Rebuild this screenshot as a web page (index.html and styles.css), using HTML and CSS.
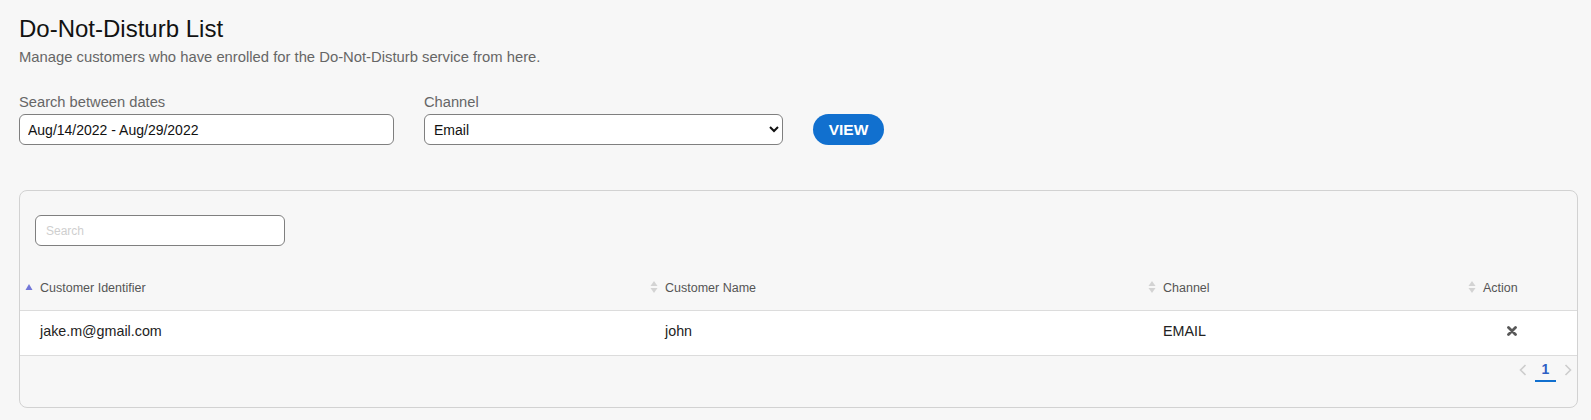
FILE: index.html
```html
<!DOCTYPE html>
<html lang="en">
<head>
    <meta charset="UTF-8">
    <meta name="viewport" content="width=device-width, initial-scale=1.0">
    <title>Do-Not-Disturb List</title>
    <link rel="stylesheet" href="styles.css">
</head>
<body>

    <h1>Do-Not-Disturb List</h1>
    <p class="subtitle">Manage customers who have enrolled for the Do-Not-Disturb service from here.</p>

    <div class="filters">
        <div class="field date-field">
            <label for="dates">Search between dates</label>
            <input id="dates" class="text-input" type="text" value="Aug/14/2022 - Aug/29/2022">
        </div>
        <div class="field channel-field">
            <label for="channel">Channel</label>
            <select id="channel" class="select-input">
                <option>Email</option>
                <option>SMS</option>
                <option>Voice</option>
            </select>
        </div>
        <button class="view-btn">VIEW</button>
    </div>

    <div class="card">
        <div class="card-search">
            <input class="search-input" type="text" placeholder="Search">
        </div>

        <table class="dnd-table">
            <colgroup>
                <col class="col-id">
                <col class="col-name">
                <col class="col-channel">
                <col class="col-action">
            </colgroup>
            <thead>
                <tr>
                    <th>
                        <span class="sort sort-asc">
                            <svg width="8" height="14" viewBox="0 0 8 14"><path d="M0.5 10 L4 4 L7.5 10 Z"/></svg>
                        </span>Customer Identifier
                    </th>
                    <th>
                        <span class="sort">
                            <svg width="8" height="14" viewBox="0 0 8 14"><path d="M0.5 6 L4 1 L7.5 6 Z"/><path d="M0.5 8 L4 13 L7.5 8 Z"/></svg>
                        </span>Customer Name
                    </th>
                    <th>
                        <span class="sort">
                            <svg width="8" height="14" viewBox="0 0 8 14"><path d="M0.5 6 L4 1 L7.5 6 Z"/><path d="M0.5 8 L4 13 L7.5 8 Z"/></svg>
                        </span>Channel
                    </th>
                    <th>
                        <span class="sort">
                            <svg width="8" height="14" viewBox="0 0 8 14"><path d="M0.5 6 L4 1 L7.5 6 Z"/><path d="M0.5 8 L4 13 L7.5 8 Z"/></svg>
                        </span>Action
                    </th>
                </tr>
            </thead>
            <tbody>
                <tr>
                    <td>jake.m@gmail.com</td>
                    <td>john</td>
                    <td>EMAIL</td>
                    <td class="action-cell">
                        <button class="remove-btn" title="Remove">
                            <svg width="10" height="10" viewBox="0 0 10 10"><path d="M1.5 1.5 L8.5 8.5 M8.5 1.5 L1.5 8.5"/></svg>
                        </button>
                    </td>
                </tr>
            </tbody>
        </table>

        <div class="pager">
            <span class="pager-arrow">
                <svg width="8" height="12" viewBox="0 0 8 12"><path d="M6.5 1 L1.5 6 L6.5 11"/></svg>
            </span>
            <span class="pager-page">1</span>
            <span class="pager-arrow">
                <svg width="8" height="12" viewBox="0 0 8 12"><path d="M1.5 1 L6.5 6 L1.5 11"/></svg>
            </span>
        </div>
    </div>

</body>
</html>
```

FILE: styles.css
```css
      body {
          background-color: #f7f7f7;
          color: #121212;
          font-family: 'Liberation Sans', Arial, sans-serif;
          margin: 0;
          padding: 0 13px 0 19px;
      }
      h1 {
          font-size: 24px;
          font-weight: normal;
          line-height: 28px;
          margin: 15px 0 0 0;
      }
      .subtitle {
          font-size: 14.8px;
          line-height: 18px;
          color: #666;
          margin: 5px 0 0 0;
      }
      .filters {
          display: flex;
          align-items: flex-end;
          gap: 30px;
          margin-top: 27px;
      }
      .field {
          display: flex;
          flex-direction: column;
          gap: 3px;
      }
      .field label {
          font-size: 14.7px;
          line-height: 18px;
          color: #666;
      }
      .date-field {
          width: 375px;
      }
      .channel-field {
          width: 359px;
      }
      .text-input, .select-input {
          box-sizing: border-box;
          height: 31px;
          border: 1px solid #7f7f7f;
          border-radius: 6px;
          background-color: #fff;
          font-family: 'Liberation Sans', Arial, sans-serif;
          font-size: 14px;
          color: #111;
          padding: 0 8px;
          width: 100%;
      }
      .select-input {
          padding: 0 5px;
      }
      .view-btn {
          height: 31px;
          width: 71px;
          border: none;
          border-radius: 16px;
          background-color: #1170cf;
          color: #fff;
          font-family: 'Liberation Sans', Arial, sans-serif;
          font-size: 15.5px;
          font-weight: bold;
          cursor: pointer;
      }
      .card {
          margin-top: 45px;
          border: 1px solid #d2d2d2;
          border-radius: 8px;
          padding-bottom: 25px;
      }
      .card-search {
          padding: 24px 15px 0 15px;
      }
      .search-input {
          box-sizing: border-box;
          width: 250px;
          height: 31px;
          border: 1px solid #7f7f7f;
          border-radius: 6px;
          background-color: #fff;
          font-family: 'Liberation Sans', Arial, sans-serif;
          font-size: 12px;
          padding: 0 10px;
      }
      .search-input::placeholder {
          color: #cfcfcf;
      }
      .dnd-table {
          width: 100%;
          border-collapse: collapse;
          table-layout: fixed;
          margin-top: 24px;
      }
      .col-id {
          width: 625px;
      }
      .col-name {
          width: 498px;
      }
      .col-channel {
          width: 320px;
      }
      .dnd-table th {
          height: 40px;
          padding: 0 0 4px 5px;
          text-align: left;
          font-size: 12.5px;
          font-weight: normal;
          color: #555;
          border-bottom: 1px solid #dcdcdc;
          box-sizing: border-box;
      }
      .sort {
          display: inline-block;
          width: 15px;
          vertical-align: middle;
          margin-top: -2px;
      }
      .sort svg {
          display: block;
          fill: #d3d3d3;
      }
      .sort-asc svg {
          fill: #7277d8;
      }
      .dnd-table td {
          height: 45px;
          padding: 0 0 4px 20px;
          font-size: 14.3px;
          color: #222;
          background-color: #fff;
          border-bottom: 1px solid #dcdcdc;
          box-sizing: border-box;
      }
      .dnd-table td.action-cell {
          padding-left: 44px;
      }
      .remove-btn {
          border: none;
          background: none;
          padding: 0;
          cursor: pointer;
          display: block;
      }
      .remove-btn svg {
          display: block;
          stroke: #585858;
          stroke-width: 2.8;
          stroke-linecap: round;
      }
      .pager {
          display: flex;
          justify-content: flex-end;
          align-items: center;
          gap: 8px;
          padding: 2px 5px 0 0;
      }
      .pager-arrow svg {
          display: block;
          fill: none;
          stroke: #cdcdcd;
          stroke-width: 1.6;
      }
      .pager-page {
          font-size: 14px;
          font-weight: bold;
          color: #2f5fc4;
          width: 21px;
          text-align: center;
          line-height: 22px;
          border-bottom: 2px solid #1170cf;
      }
```
